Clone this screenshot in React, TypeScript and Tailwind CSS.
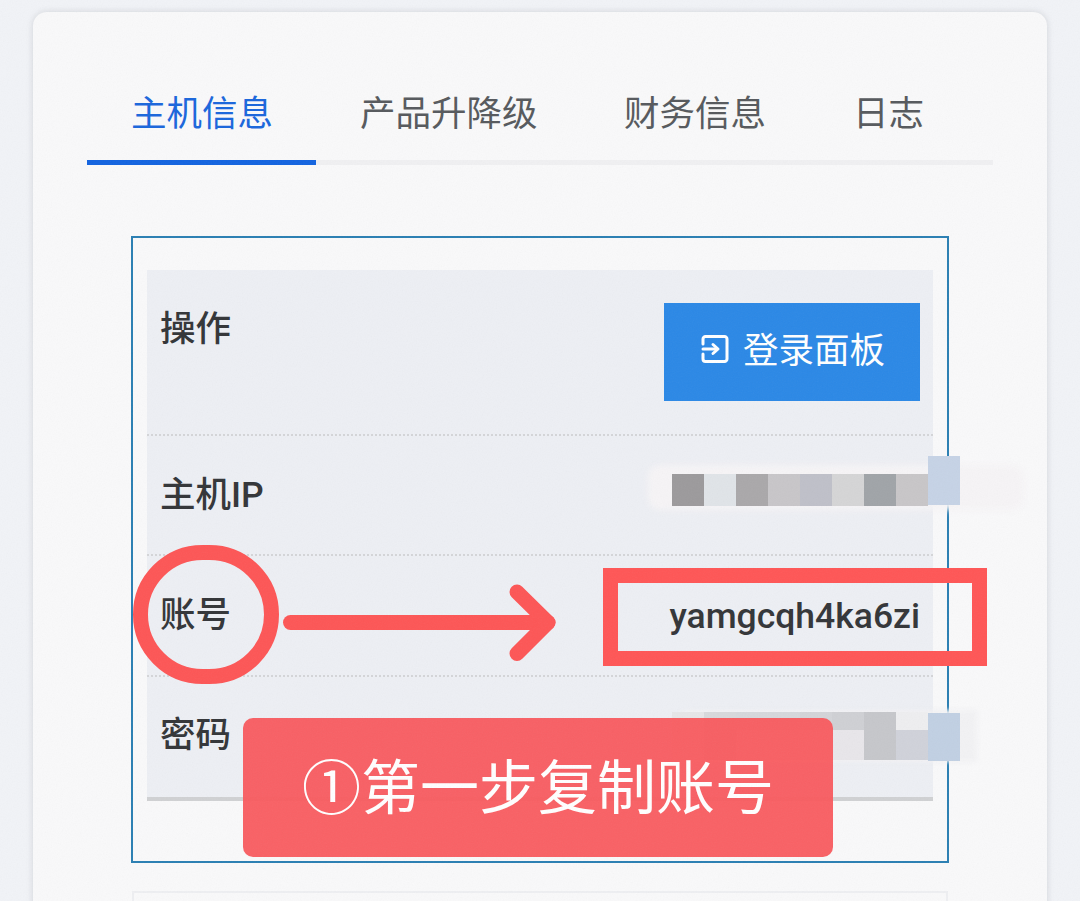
import React from "react";

const CJK = "font-['Roboto','Noto_Sans_CJK_SC',sans-serif]";

const labelCls = "text-[35.5px] leading-[50px] font-medium text-[#333538]";

function Row({ label, children, className = "", labelClass = "" }: { label: string; children?: React.ReactNode; className?: string; labelClass?: string }) {
  return (
    <div className={`flex items-center justify-between pl-[13px] pr-[14px] border-b-2 border-dotted border-[#d4d5d8] ${className}`}>
      <div className={`${labelCls} ${labelClass}`}>{label}</div>
      {children}
    </div>
  );
}

const ipCells = ["#9c9a9c", "#e0e4e8", "#aaa8aa", "#c8c6c9", "#bfc0c9", "#d5d5d6", "#a0a4a8", "#c8c6c8"];
const pwdTop = ["#e6e6e8", "#d8d9dc", "#d6d8dc", "#d6d8dc", "#d3d4d8", "#cfd0d4", "#c6c7cb", "#eeeef0"];
const pwdBottom = ["#e6e6e8", "#d8d0d2", "#e6e5e9", "#e6e5e9", "#e8e6ea", "#e8e6ea", "#c6c7cb", "#d0d2da"];

export default function App() {
  return (
    <div className={`relative w-[1080px] h-[901px] overflow-hidden bg-[#f1f3f7] pt-[12px] pl-[33px] ${CJK}`}>
      <div className="w-[1014px] h-[950px] rounded-[14px] bg-[#f9f9fa] shadow-[0_0_6px_rgba(170,172,180,0.45)] px-[54px] pt-[71px]">
        {/* tabs */}
        <div className="flex h-[82px] border-b-[5px] border-[#f0f0f2] text-[35.5px] leading-[62px] text-[#56595d]">
          <div className="h-[82px] w-[229px] pl-[44px] text-[#1a66dc] border-b-[5px] border-[#1263e0]">主机信息</div>
          <div className="pl-[44px] w-[308px]">产品升降级</div>
          <div className="w-[229px]">财务信息</div>
          <div>日志</div>
        </div>

        {/* info box */}
        <div className="mt-[71px] ml-[44px] w-[818px] h-[627px] border-2 border-[#2a7fb3] px-[14px] pt-[32px]">
          <div className="bg-[#edeff4] border-b-[4px] border-[#d0d1d3]">
            <div className="flex items-start justify-between pl-[13px] pr-[13px] h-[166px] border-b-2 border-dotted border-[#d4d5d8]">
              <div className={`mt-[34px] ${labelCls}`}>操作</div>
              <div className="mt-[33px] flex items-center justify-center gap-[14px] w-[256px] h-[98px] pl-[2px] bg-[#2b88e6] text-white text-[35.5px]">
                <svg className="-mt-[6px]" width="28" height="28" viewBox="0 0 28 28" fill="none" stroke="currentColor" strokeWidth="3" strokeLinecap="round" strokeLinejoin="round">
                  <path d="M2 9V4a2.500 2.500 0 0 1 2.500-2.500h19A2.500 2.500 0 0 1 26 4v20a2.500 2.500 0 0 1-2.500 2.500h-19A2.500 2.500 0 0 1 2 24v-5" />
                  <path d="M2 14h13" />
                  <path d="M12 9.500l5 4.500-5 4.500" />
                </svg>
                <span>登录面板</span>
              </div>
            </div>
            <Row label="主机IP" className="h-[120px]" />
            <Row label="账号" className="h-[121px]" labelClass="-mt-[2px]">
              <div className="text-[35.5px] font-medium text-[#333538] pt-[2px] -mr-[1px]">yamgcqh4ka6zi</div>
            </Row>
            <div className="flex items-center pl-[13px] h-[120px]">
              <div className={`${labelCls} -mt-[4px]`}>密码</div>
            </div>
          </div>
        </div>

        {/* next box */}
        <div className="mt-[28px] ml-[45px] w-[816px] h-[60px] border-2 border-[#eeeff2]" />
      </div>

      {/* mosaic over host IP */}
      <div className="absolute left-[648px] top-[456px] w-[376px] h-[54px] flex items-start">
        <div className="absolute left-0 right-0 top-[9px] h-[45px] rounded-[12px] bg-[#f6f4f6] blur-[3px]" />
        <div className="relative ml-[24px] mt-[18px] flex">
          {ipCells.map((c, i) => (
            <div key={i} className="w-[32px] h-[32px]" style={{ background: c }} />
          ))}
        </div>
        <div className="relative w-[32px] h-[49px] bg-[#c6d3e6]" />
      </div>

      {/* mosaic over password */}
      <div className="absolute left-[672px] top-[710px] w-[305px] h-[52px] flex items-start">
        <div className="absolute inset-0 rounded-l-[18px] bg-[#f2f2f4] blur-[2px]" />
        <div className="relative mt-[2px] flex flex-col">
          <div className="flex">
            {pwdTop.map((c, i) => (
              <div key={i} className="w-[32px] h-[18px]" style={{ background: c }} />
            ))}
          </div>
          <div className="flex">
            {pwdBottom.map((c, i) => (
              <div key={i} className="w-[32px] h-[30px]" style={{ background: c }} />
            ))}
          </div>
        </div>
        <div className="relative mt-[3px] w-[32px] h-[48px] bg-[#c1d0e3]" />
      </div>

      {/* annotations */}
      <div className="absolute left-[133px] top-[545px] w-[146px] h-[139px] rounded-full border-[15px] border-[#fd5656]" />
      <svg className="absolute left-[280px] top-[580px]" width="280" height="84" viewBox="0 0 280 84" fill="none" stroke="#fd5656" strokeWidth="15" strokeLinecap="round" strokeLinejoin="round">
        <path d="M10.500 42.500H268" />
        <path d="M237 12l31 30.500-31 31" />
      </svg>
      <div className="absolute left-[603px] top-[568px] w-[384px] h-[98px] border-[15px] border-[#ff5656]" />
      <div className="absolute left-[243px] top-[718px] w-[590px] h-[139px] rounded-[10px] bg-[#f9575b]/[0.94] flex items-center justify-center text-white text-[59px] leading-none pt-[2px]">
        ①第一步复制账号
      </div>

      {/* paper grain */}
      <svg className="absolute inset-0 pointer-events-none opacity-[0.05]" width="1080" height="901">
        <filter id="grain">
          <feTurbulence type="fractalNoise" baseFrequency="0.8" numOctaves="2" stitchTiles="stitch" />
          <feColorMatrix type="saturate" values="0" />
        </filter>
        <rect width="1080" height="901" filter="url(#grain)" />
      </svg>
    </div>
  );
}
